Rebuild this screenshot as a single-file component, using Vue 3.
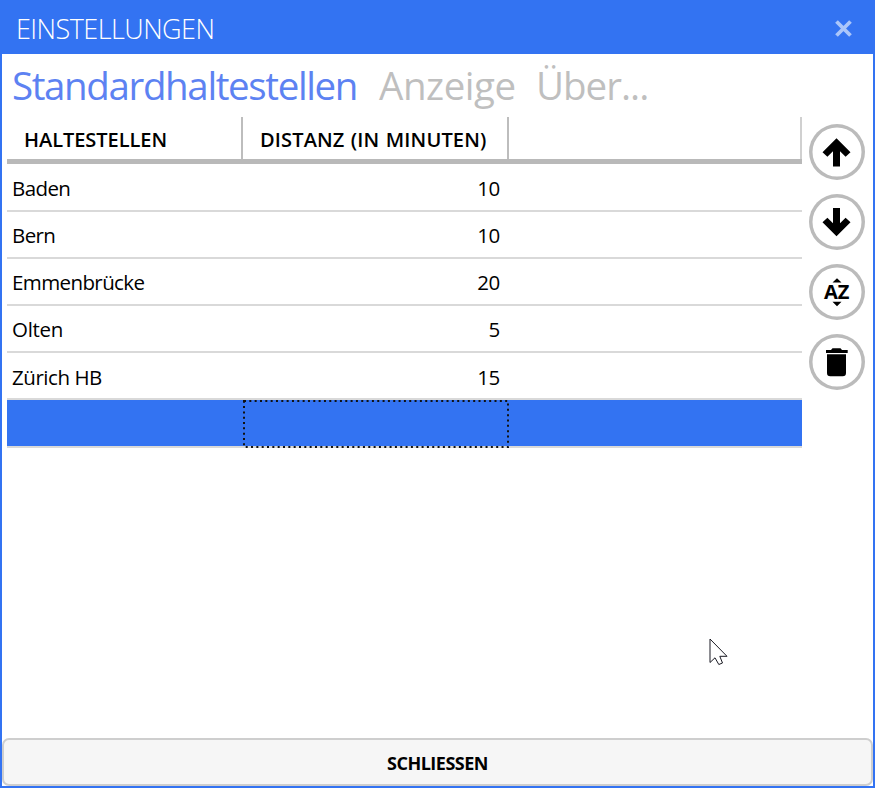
<script setup>
const tabs = [
  { label: 'Standardhaltestellen', key: 'stops', active: true },
  { label: 'Anzeige', key: 'display' },
  { label: 'Über...', key: 'about' },
]
const rows = [
  { name: 'Baden', key: 'baden', minutes: 10 },
  { name: 'Bern', key: 'bern', minutes: 10 },
  { name: 'Emmenbrücke', key: 'emmen', minutes: 20 },
  { name: 'Olten', key: 'olten', minutes: 5 },
  { name: 'Zürich HB', key: 'zurich', minutes: 15 },
]
</script>

<template>
  <div class="window">
    <header class="titlebar">
      <span class="title">EINSTELLUNGEN</span>
      <button class="close" aria-label="Schliessen">
        <svg width="18" height="18" viewBox="0 0 18 18"><path d="M1.5 1.5L15.5 15.5M15.5 1.5L1.5 15.5" /></svg>
      </button>
    </header>
    <nav class="tabs">
      <span v-for="t in tabs" :key="t.key" class="tab" :class="[t.key, { active: t.active }]">{{ t.label }}</span>
    </nav>
    <main class="content">
      <section class="grid">
        <div class="head">
          <div class="th first"><span>HALTESTELLEN</span></div>
          <div class="th second"><span>DISTANZ (IN MINUTEN)</span></div>
          <div class="th last"></div>
        </div>
        <div v-for="r in rows" :key="r.key" class="row" :class="r.key">
          <div class="name"><span>{{ r.name }}</span></div>
          <div class="num">{{ r.minutes }}</div>
        </div>
        <div class="row selected">
          <div class="name"></div>
          <div class="focus">
            <svg width="266" height="48" viewBox="0 0 266 48">
              <rect x="1" y="1" width="264" height="46" />
            </svg>
          </div>
        </div>
      </section>
      <aside class="actions">
        <button class="round" aria-label="Nach oben">
          <svg width="56" height="56" viewBox="0 0 56 56"><path d="M27.5 14.3L41.5 28.3L36.6 32.8L31 27.3V42.5H24V27.3L18.4 32.8L13.5 28.3Z" /></svg>
        </button>
        <button class="round" aria-label="Nach unten">
          <svg width="56" height="56" viewBox="0 0 56 56"><path d="M27.5 42.2L41.5 28.2L36.6 23.7L31 29.2V14H24V29.2L18.4 23.7L13.5 28.2Z" /></svg>
        </button>
        <button class="round" aria-label="Sortieren">
          <svg width="56" height="56" viewBox="0 0 56 56">
            <path d="M28 14.2L32.5 18.6H23.5ZM28 42.2L32.5 37.8H23.5Z" />
            <text x="15" y="35.2" textLength="25.5" lengthAdjust="spacingAndGlyphs">AZ</text>
          </svg>
        </button>
        <button class="round" aria-label="Löschen">
          <svg width="56" height="56" viewBox="0 0 56 56"><path d="M17 16H22L23.5 14.2H31.5L33 16H38.7V19H17ZM18 20.3H37V39Q37 42.3 33.7 42.3H21.3Q18 42.3 18 39Z" /></svg>
        </button>
      </aside>
    </main>
    <button class="footer"><span>SCHLIESSEN</span></button>
    <svg class="cursor" width="20" height="28" viewBox="0 0 20 28">
      <path d="M1 1V24.5L6 19.8L9.8 26.5L13.5 25L10.8 18.3H18Z" />
    </svg>
  </div>
</template>

<style>
body { background: #fff; }
</style>

<style scoped>
* { box-sizing: border-box; }
button { margin: 0; padding: 0; border: 0; background: none; font: inherit; color: inherit; }
svg { display: block; }
.window {
  position: relative;
  display: flex;
  flex-direction: column;
  width: 875px;
  height: 788px;
  overflow: hidden;
  border: 2px solid #3373f2;
  border-top: 0;
  background: #fff;
  color: #000;
  font-family: "Open Sans", "Noto Sans", sans-serif;
  white-space: nowrap;
}
.titlebar {
  display: flex;
  flex: none;
  align-items: center;
  justify-content: space-between;
  height: 54px;
  padding: 3px 20px 0 14px;
  background: #3373f2;
  color: #fff;
}
.title { font-size: 27px; font-weight: 300; letter-spacing: -0.55px; }
.close path { fill: none; stroke: #abc6fa; stroke-width: 3.8; }
.tabs {
  display: flex;
  flex: none;
  height: 63px;
  padding-left: 10px;
  font-size: 38.5px;
  line-height: 62px;
  color: #bfbfbf;
}
.tab.stops { width: 367px; letter-spacing: -1.37px; }
.tab.display { width: 157px; letter-spacing: -0.45px; }
.tab.about { letter-spacing: -1px; }
.tab.active { color: #5d82f2; }
.content { display: flex; flex: 1; padding-left: 5px; }
.grid { width: 795px; }
.head { display: flex; height: 47px; border-bottom: 5px solid #b9b9b9; }
.th {
  border-right: 2px solid #bdbdbd;
  padding-left: 17px;
  font-size: 20px;
  line-height: 46px;
  font-weight: 600;
}
.th.first { width: 236px; letter-spacing: -0.05px; }
.th.second { width: 266px; letter-spacing: 0.15px; word-spacing: 1px; }
.th.last { flex: 1; border-color: #d0d0d0; }
.row {
  display: flex;
  height: 47px;
  border-bottom: 2px solid #d9d9d9;
  font-size: 20.5px;
  line-height: 46px;
}
.row.baden { height: 48px; line-height: 48px; }
.row.zurich { line-height: 48px; }
.row.selected { height: 48px; background: #3373f2; }
.name { width: 236px; padding-left: 5px; letter-spacing: -0.6px; }
.row.zurich .name { letter-spacing: -0.45px; }
.row.olten .name { letter-spacing: -0.3px; }
.num { width: 257px; text-align: right; letter-spacing: -0.3px; }
.focus rect { fill: none; stroke: #111; stroke-width: 2; stroke-dasharray: 2 3.33; }
.actions {
  display: flex;
  flex-direction: column;
  gap: 14px;
  padding: 7px 0 0 7px;
}
.round {
  width: 56px;
  height: 56px;
  border-radius: 50%;
  box-shadow: inset 0 0 0 3.5px #bbb;
}
.round text { font-size: 19px; font-weight: 700; }
.footer {
  flex: none;
  height: 48px;
  padding-top: 2px;
  border: 2px solid #cecece;
  border-radius: 7px;
  background: #f6f6f6;
  font-size: 18px;
  font-weight: 700;
  letter-spacing: -0.5px;
}
.cursor { position: absolute; left: 707px; top: 638px; }
.cursor path { fill: #fff; stroke: #1b1b24; stroke-width: 1; }
</style>
